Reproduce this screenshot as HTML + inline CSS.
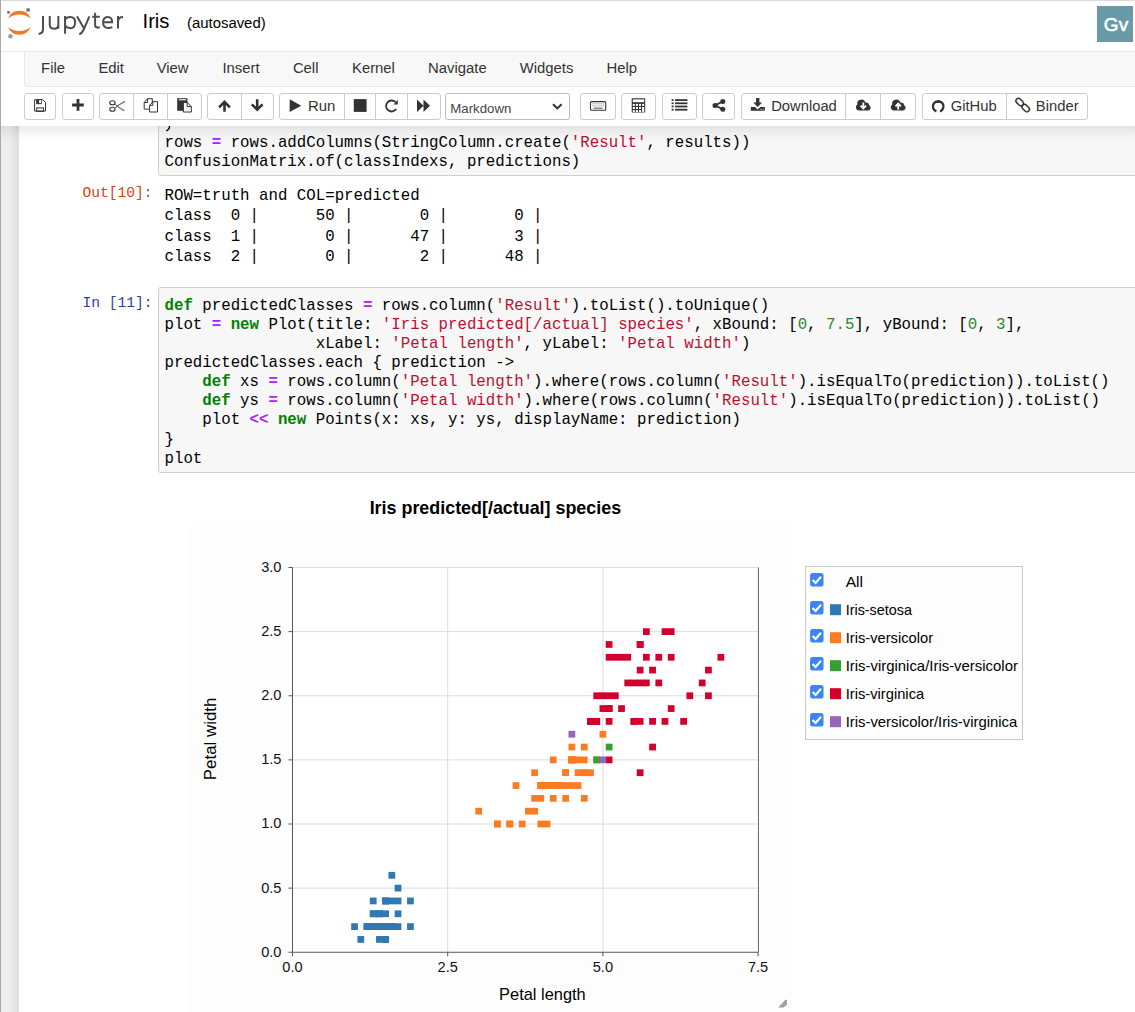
<!DOCTYPE html><html><head><meta charset="utf-8"><style>
html,body{margin:0;padding:0;background:#fff;width:1135px;height:1012px;overflow:hidden}
svg{display:block}
text{white-space:pre}
</style></head><body>
<svg width="1135" height="1012" viewBox="0 0 1135 1012">
<defs>
<linearGradient id="shTop" x1="0" y1="0" x2="0" y2="1">
<stop offset="0" stop-color="#000" stop-opacity="0.08"/>
<stop offset="0.15" stop-color="#000" stop-opacity="0.065"/>
<stop offset="0.4" stop-color="#000" stop-opacity="0.035"/>
<stop offset="0.7" stop-color="#000" stop-opacity="0.012"/>
<stop offset="1" stop-color="#000" stop-opacity="0"/>
</linearGradient>
<linearGradient id="shLeft" x1="1" y1="0" x2="0" y2="0">
<stop offset="0" stop-color="#000" stop-opacity="0.07"/>
<stop offset="1" stop-color="#000" stop-opacity="0"/>
</linearGradient>
</defs>

<rect x="0" y="0" width="1135" height="1012" fill="#fff"/>
<rect x="1" y="126" width="18" height="886" fill="#eeeeee"/>
<rect x="9" y="126" width="10" height="886" fill="url(#shLeft)"/>
<rect x="158.5" y="100.5" width="990" height="75" rx="2" fill="#f7f7f7" stroke="#cfcfcf" stroke-width="1"/>
<path d="M169.6,125.5 Q169.6,129.6 166.2,130.9" fill="none" stroke="#000" stroke-width="1.4"/>
<text x="164.50" y="147.1" font-family='"Liberation Mono", monospace' font-size="15.75" fill="#000" font-weight="normal" xml:space="preserve">rows</text><text x="211.75" y="147.1" font-family='"Liberation Mono", monospace' font-size="15.75" fill="#aa22ff" font-weight="bold" xml:space="preserve">=</text><text x="230.65" y="147.1" font-family='"Liberation Mono", monospace' font-size="15.75" fill="#000" font-weight="normal" xml:space="preserve">rows</text><text x="268.45" y="147.1" font-family='"Liberation Mono", monospace' font-size="15.75" fill="#000" font-weight="normal" xml:space="preserve">.</text><text x="277.90" y="147.1" font-family='"Liberation Mono", monospace' font-size="15.75" fill="#000" font-weight="normal" xml:space="preserve">addColumns</text><text x="372.40" y="147.1" font-family='"Liberation Mono", monospace' font-size="15.75" fill="#000" font-weight="normal" xml:space="preserve">(</text><text x="381.85" y="147.1" font-family='"Liberation Mono", monospace' font-size="15.75" fill="#000" font-weight="normal" xml:space="preserve">StringColumn</text><text x="495.25" y="147.1" font-family='"Liberation Mono", monospace' font-size="15.75" fill="#000" font-weight="normal" xml:space="preserve">.</text><text x="504.70" y="147.1" font-family='"Liberation Mono", monospace' font-size="15.75" fill="#000" font-weight="normal" xml:space="preserve">create</text><text x="561.40" y="147.1" font-family='"Liberation Mono", monospace' font-size="15.75" fill="#000" font-weight="normal" xml:space="preserve">(</text><text x="570.85" y="147.1" font-family='"Liberation Mono", monospace' font-size="15.75" fill="#bb1030" font-weight="normal" xml:space="preserve">&#x27;Result&#x27;</text><text x="646.45" y="147.1" font-family='"Liberation Mono", monospace' font-size="15.75" fill="#000" font-weight="normal" xml:space="preserve">,</text><text x="665.35" y="147.1" font-family='"Liberation Mono", monospace' font-size="15.75" fill="#000" font-weight="normal" xml:space="preserve">results</text><text x="731.50" y="147.1" font-family='"Liberation Mono", monospace' font-size="15.75" fill="#000" font-weight="normal" xml:space="preserve">)</text><text x="740.95" y="147.1" font-family='"Liberation Mono", monospace' font-size="15.75" fill="#000" font-weight="normal" xml:space="preserve">)</text>
<text x="164.50" y="166.1" font-family='"Liberation Mono", monospace' font-size="15.75" fill="#000" font-weight="normal" xml:space="preserve">ConfusionMatrix</text><text x="306.25" y="166.1" font-family='"Liberation Mono", monospace' font-size="15.75" fill="#000" font-weight="normal" xml:space="preserve">.</text><text x="315.70" y="166.1" font-family='"Liberation Mono", monospace' font-size="15.75" fill="#000" font-weight="normal" xml:space="preserve">of</text><text x="334.60" y="166.1" font-family='"Liberation Mono", monospace' font-size="15.75" fill="#000" font-weight="normal" xml:space="preserve">(</text><text x="344.05" y="166.1" font-family='"Liberation Mono", monospace' font-size="15.75" fill="#000" font-weight="normal" xml:space="preserve">classIndexs</text><text x="448.00" y="166.1" font-family='"Liberation Mono", monospace' font-size="15.75" fill="#000" font-weight="normal" xml:space="preserve">,</text><text x="466.90" y="166.1" font-family='"Liberation Mono", monospace' font-size="15.75" fill="#000" font-weight="normal" xml:space="preserve">predictions</text><text x="570.85" y="166.1" font-family='"Liberation Mono", monospace' font-size="15.75" fill="#000" font-weight="normal" xml:space="preserve">)</text>
<text x="152.6" y="196.9" font-family='"Liberation Mono", monospace' font-size="14.625" fill="#d84315" font-weight="normal" text-anchor="end" >Out[10]:</text>
<text x="164.5" y="199.7" font-family='"Liberation Mono", monospace' font-size="15.75" fill="#000" xml:space="preserve">ROW=truth and COL=predicted</text>
<text x="164.5" y="219.9" font-family='"Liberation Mono", monospace' font-size="15.75" fill="#000" xml:space="preserve">class  0 |      50 |       0 |       0 |</text>
<text x="164.5" y="240.7" font-family='"Liberation Mono", monospace' font-size="15.75" fill="#000" xml:space="preserve">class  1 |       0 |      47 |       3 |</text>
<text x="164.5" y="260.7" font-family='"Liberation Mono", monospace' font-size="15.75" fill="#000" xml:space="preserve">class  2 |       0 |       2 |      48 |</text>
<text x="152.6" y="307" font-family='"Liberation Mono", monospace' font-size="14.625" fill="#303f9f" font-weight="normal" text-anchor="end" >In [11]:</text>
<rect x="158.5" y="287.5" width="990" height="185" rx="2" fill="#f7f7f7" stroke="#cfcfcf" stroke-width="1"/>
<text x="164.50" y="309.9" font-family='"Liberation Mono", monospace' font-size="15.75" fill="#008000" font-weight="bold" xml:space="preserve">def</text><text x="202.30" y="309.9" font-family='"Liberation Mono", monospace' font-size="15.75" fill="#000" font-weight="normal" xml:space="preserve">predictedClasses</text><text x="362.95" y="309.9" font-family='"Liberation Mono", monospace' font-size="15.75" fill="#aa22ff" font-weight="bold" xml:space="preserve">=</text><text x="381.85" y="309.9" font-family='"Liberation Mono", monospace' font-size="15.75" fill="#000" font-weight="normal" xml:space="preserve">rows</text><text x="419.65" y="309.9" font-family='"Liberation Mono", monospace' font-size="15.75" fill="#000" font-weight="normal" xml:space="preserve">.</text><text x="429.10" y="309.9" font-family='"Liberation Mono", monospace' font-size="15.75" fill="#000" font-weight="normal" xml:space="preserve">column</text><text x="485.80" y="309.9" font-family='"Liberation Mono", monospace' font-size="15.75" fill="#000" font-weight="normal" xml:space="preserve">(</text><text x="495.25" y="309.9" font-family='"Liberation Mono", monospace' font-size="15.75" fill="#bb1030" font-weight="normal" xml:space="preserve">&#x27;Result&#x27;</text><text x="570.85" y="309.9" font-family='"Liberation Mono", monospace' font-size="15.75" fill="#000" font-weight="normal" xml:space="preserve">)</text><text x="580.30" y="309.9" font-family='"Liberation Mono", monospace' font-size="15.75" fill="#000" font-weight="normal" xml:space="preserve">.</text><text x="589.75" y="309.9" font-family='"Liberation Mono", monospace' font-size="15.75" fill="#000" font-weight="normal" xml:space="preserve">toList</text><text x="646.45" y="309.9" font-family='"Liberation Mono", monospace' font-size="15.75" fill="#000" font-weight="normal" xml:space="preserve">(</text><text x="655.90" y="309.9" font-family='"Liberation Mono", monospace' font-size="15.75" fill="#000" font-weight="normal" xml:space="preserve">)</text><text x="665.35" y="309.9" font-family='"Liberation Mono", monospace' font-size="15.75" fill="#000" font-weight="normal" xml:space="preserve">.</text><text x="674.80" y="309.9" font-family='"Liberation Mono", monospace' font-size="15.75" fill="#000" font-weight="normal" xml:space="preserve">toUnique</text><text x="750.40" y="309.9" font-family='"Liberation Mono", monospace' font-size="15.75" fill="#000" font-weight="normal" xml:space="preserve">(</text><text x="759.85" y="309.9" font-family='"Liberation Mono", monospace' font-size="15.75" fill="#000" font-weight="normal" xml:space="preserve">)</text>
<text x="164.50" y="328.99" font-family='"Liberation Mono", monospace' font-size="15.75" fill="#000" font-weight="normal" xml:space="preserve">plot</text><text x="211.75" y="328.99" font-family='"Liberation Mono", monospace' font-size="15.75" fill="#aa22ff" font-weight="bold" xml:space="preserve">=</text><text x="230.65" y="328.99" font-family='"Liberation Mono", monospace' font-size="15.75" fill="#008000" font-weight="bold" xml:space="preserve">new</text><text x="268.45" y="328.99" font-family='"Liberation Mono", monospace' font-size="15.75" fill="#000" font-weight="normal" xml:space="preserve">Plot</text><text x="306.25" y="328.99" font-family='"Liberation Mono", monospace' font-size="15.75" fill="#000" font-weight="normal" xml:space="preserve">(</text><text x="315.70" y="328.99" font-family='"Liberation Mono", monospace' font-size="15.75" fill="#000" font-weight="normal" xml:space="preserve">title</text><text x="362.95" y="328.99" font-family='"Liberation Mono", monospace' font-size="15.75" fill="#000" font-weight="normal" xml:space="preserve">:</text><text x="381.85" y="328.99" font-family='"Liberation Mono", monospace' font-size="15.75" fill="#bb1030" font-weight="normal" xml:space="preserve">&#x27;Iris predicted[/actual] species&#x27;</text><text x="693.70" y="328.99" font-family='"Liberation Mono", monospace' font-size="15.75" fill="#000" font-weight="normal" xml:space="preserve">,</text><text x="712.60" y="328.99" font-family='"Liberation Mono", monospace' font-size="15.75" fill="#000" font-weight="normal" xml:space="preserve">xBound</text><text x="769.30" y="328.99" font-family='"Liberation Mono", monospace' font-size="15.75" fill="#000" font-weight="normal" xml:space="preserve">:</text><text x="788.20" y="328.99" font-family='"Liberation Mono", monospace' font-size="15.75" fill="#000" font-weight="normal" xml:space="preserve">[</text><text x="797.65" y="328.99" font-family='"Liberation Mono", monospace' font-size="15.75" fill="#2a8a2a" font-weight="normal" xml:space="preserve">0</text><text x="807.10" y="328.99" font-family='"Liberation Mono", monospace' font-size="15.75" fill="#000" font-weight="normal" xml:space="preserve">,</text><text x="826.00" y="328.99" font-family='"Liberation Mono", monospace' font-size="15.75" fill="#2a8a2a" font-weight="normal" xml:space="preserve">7.5</text><text x="854.35" y="328.99" font-family='"Liberation Mono", monospace' font-size="15.75" fill="#000" font-weight="normal" xml:space="preserve">]</text><text x="863.80" y="328.99" font-family='"Liberation Mono", monospace' font-size="15.75" fill="#000" font-weight="normal" xml:space="preserve">,</text><text x="882.70" y="328.99" font-family='"Liberation Mono", monospace' font-size="15.75" fill="#000" font-weight="normal" xml:space="preserve">yBound</text><text x="939.40" y="328.99" font-family='"Liberation Mono", monospace' font-size="15.75" fill="#000" font-weight="normal" xml:space="preserve">:</text><text x="958.30" y="328.99" font-family='"Liberation Mono", monospace' font-size="15.75" fill="#000" font-weight="normal" xml:space="preserve">[</text><text x="967.75" y="328.99" font-family='"Liberation Mono", monospace' font-size="15.75" fill="#2a8a2a" font-weight="normal" xml:space="preserve">0</text><text x="977.20" y="328.99" font-family='"Liberation Mono", monospace' font-size="15.75" fill="#000" font-weight="normal" xml:space="preserve">,</text><text x="996.10" y="328.99" font-family='"Liberation Mono", monospace' font-size="15.75" fill="#2a8a2a" font-weight="normal" xml:space="preserve">3</text><text x="1005.55" y="328.99" font-family='"Liberation Mono", monospace' font-size="15.75" fill="#000" font-weight="normal" xml:space="preserve">]</text><text x="1015.00" y="328.99" font-family='"Liberation Mono", monospace' font-size="15.75" fill="#000" font-weight="normal" xml:space="preserve">,</text>
<text x="315.70" y="348.08" font-family='"Liberation Mono", monospace' font-size="15.75" fill="#000" font-weight="normal" xml:space="preserve">xLabel</text><text x="372.40" y="348.08" font-family='"Liberation Mono", monospace' font-size="15.75" fill="#000" font-weight="normal" xml:space="preserve">:</text><text x="391.30" y="348.08" font-family='"Liberation Mono", monospace' font-size="15.75" fill="#bb1030" font-weight="normal" xml:space="preserve">&#x27;Petal length&#x27;</text><text x="523.60" y="348.08" font-family='"Liberation Mono", monospace' font-size="15.75" fill="#000" font-weight="normal" xml:space="preserve">,</text><text x="542.50" y="348.08" font-family='"Liberation Mono", monospace' font-size="15.75" fill="#000" font-weight="normal" xml:space="preserve">yLabel</text><text x="599.20" y="348.08" font-family='"Liberation Mono", monospace' font-size="15.75" fill="#000" font-weight="normal" xml:space="preserve">:</text><text x="618.10" y="348.08" font-family='"Liberation Mono", monospace' font-size="15.75" fill="#bb1030" font-weight="normal" xml:space="preserve">&#x27;Petal width&#x27;</text><text x="740.95" y="348.08" font-family='"Liberation Mono", monospace' font-size="15.75" fill="#000" font-weight="normal" xml:space="preserve">)</text>
<text x="164.50" y="367.17" font-family='"Liberation Mono", monospace' font-size="15.75" fill="#000" font-weight="normal" xml:space="preserve">predictedClasses</text><text x="315.70" y="367.17" font-family='"Liberation Mono", monospace' font-size="15.75" fill="#000" font-weight="normal" xml:space="preserve">.</text><text x="325.15" y="367.17" font-family='"Liberation Mono", monospace' font-size="15.75" fill="#000" font-weight="normal" xml:space="preserve">each</text><text x="372.40" y="367.17" font-family='"Liberation Mono", monospace' font-size="15.75" fill="#000" font-weight="normal" xml:space="preserve">{</text><text x="391.30" y="367.17" font-family='"Liberation Mono", monospace' font-size="15.75" fill="#000" font-weight="normal" xml:space="preserve">prediction</text><text x="495.25" y="367.17" font-family='"Liberation Mono", monospace' font-size="15.75" fill="#000" font-weight="normal" xml:space="preserve">-&gt;</text>
<text x="202.30" y="386.26" font-family='"Liberation Mono", monospace' font-size="15.75" fill="#008000" font-weight="bold" xml:space="preserve">def</text><text x="240.10" y="386.26" font-family='"Liberation Mono", monospace' font-size="15.75" fill="#000" font-weight="normal" xml:space="preserve">xs</text><text x="268.45" y="386.26" font-family='"Liberation Mono", monospace' font-size="15.75" fill="#aa22ff" font-weight="bold" xml:space="preserve">=</text><text x="287.35" y="386.26" font-family='"Liberation Mono", monospace' font-size="15.75" fill="#000" font-weight="normal" xml:space="preserve">rows</text><text x="325.15" y="386.26" font-family='"Liberation Mono", monospace' font-size="15.75" fill="#000" font-weight="normal" xml:space="preserve">.</text><text x="334.60" y="386.26" font-family='"Liberation Mono", monospace' font-size="15.75" fill="#000" font-weight="normal" xml:space="preserve">column</text><text x="391.30" y="386.26" font-family='"Liberation Mono", monospace' font-size="15.75" fill="#000" font-weight="normal" xml:space="preserve">(</text><text x="400.75" y="386.26" font-family='"Liberation Mono", monospace' font-size="15.75" fill="#bb1030" font-weight="normal" xml:space="preserve">&#x27;Petal length&#x27;</text><text x="533.05" y="386.26" font-family='"Liberation Mono", monospace' font-size="15.75" fill="#000" font-weight="normal" xml:space="preserve">)</text><text x="542.50" y="386.26" font-family='"Liberation Mono", monospace' font-size="15.75" fill="#000" font-weight="normal" xml:space="preserve">.</text><text x="551.95" y="386.26" font-family='"Liberation Mono", monospace' font-size="15.75" fill="#000" font-weight="normal" xml:space="preserve">where</text><text x="599.20" y="386.26" font-family='"Liberation Mono", monospace' font-size="15.75" fill="#000" font-weight="normal" xml:space="preserve">(</text><text x="608.65" y="386.26" font-family='"Liberation Mono", monospace' font-size="15.75" fill="#000" font-weight="normal" xml:space="preserve">rows</text><text x="646.45" y="386.26" font-family='"Liberation Mono", monospace' font-size="15.75" fill="#000" font-weight="normal" xml:space="preserve">.</text><text x="655.90" y="386.26" font-family='"Liberation Mono", monospace' font-size="15.75" fill="#000" font-weight="normal" xml:space="preserve">column</text><text x="712.60" y="386.26" font-family='"Liberation Mono", monospace' font-size="15.75" fill="#000" font-weight="normal" xml:space="preserve">(</text><text x="722.05" y="386.26" font-family='"Liberation Mono", monospace' font-size="15.75" fill="#bb1030" font-weight="normal" xml:space="preserve">&#x27;Result&#x27;</text><text x="797.65" y="386.26" font-family='"Liberation Mono", monospace' font-size="15.75" fill="#000" font-weight="normal" xml:space="preserve">)</text><text x="807.10" y="386.26" font-family='"Liberation Mono", monospace' font-size="15.75" fill="#000" font-weight="normal" xml:space="preserve">.</text><text x="816.55" y="386.26" font-family='"Liberation Mono", monospace' font-size="15.75" fill="#000" font-weight="normal" xml:space="preserve">isEqualTo</text><text x="901.60" y="386.26" font-family='"Liberation Mono", monospace' font-size="15.75" fill="#000" font-weight="normal" xml:space="preserve">(</text><text x="911.05" y="386.26" font-family='"Liberation Mono", monospace' font-size="15.75" fill="#000" font-weight="normal" xml:space="preserve">prediction</text><text x="1005.55" y="386.26" font-family='"Liberation Mono", monospace' font-size="15.75" fill="#000" font-weight="normal" xml:space="preserve">)</text><text x="1015.00" y="386.26" font-family='"Liberation Mono", monospace' font-size="15.75" fill="#000" font-weight="normal" xml:space="preserve">)</text><text x="1024.45" y="386.26" font-family='"Liberation Mono", monospace' font-size="15.75" fill="#000" font-weight="normal" xml:space="preserve">.</text><text x="1033.90" y="386.26" font-family='"Liberation Mono", monospace' font-size="15.75" fill="#000" font-weight="normal" xml:space="preserve">toList</text><text x="1090.60" y="386.26" font-family='"Liberation Mono", monospace' font-size="15.75" fill="#000" font-weight="normal" xml:space="preserve">(</text><text x="1100.05" y="386.26" font-family='"Liberation Mono", monospace' font-size="15.75" fill="#000" font-weight="normal" xml:space="preserve">)</text>
<text x="202.30" y="405.35" font-family='"Liberation Mono", monospace' font-size="15.75" fill="#008000" font-weight="bold" xml:space="preserve">def</text><text x="240.10" y="405.35" font-family='"Liberation Mono", monospace' font-size="15.75" fill="#000" font-weight="normal" xml:space="preserve">ys</text><text x="268.45" y="405.35" font-family='"Liberation Mono", monospace' font-size="15.75" fill="#aa22ff" font-weight="bold" xml:space="preserve">=</text><text x="287.35" y="405.35" font-family='"Liberation Mono", monospace' font-size="15.75" fill="#000" font-weight="normal" xml:space="preserve">rows</text><text x="325.15" y="405.35" font-family='"Liberation Mono", monospace' font-size="15.75" fill="#000" font-weight="normal" xml:space="preserve">.</text><text x="334.60" y="405.35" font-family='"Liberation Mono", monospace' font-size="15.75" fill="#000" font-weight="normal" xml:space="preserve">column</text><text x="391.30" y="405.35" font-family='"Liberation Mono", monospace' font-size="15.75" fill="#000" font-weight="normal" xml:space="preserve">(</text><text x="400.75" y="405.35" font-family='"Liberation Mono", monospace' font-size="15.75" fill="#bb1030" font-weight="normal" xml:space="preserve">&#x27;Petal width&#x27;</text><text x="523.60" y="405.35" font-family='"Liberation Mono", monospace' font-size="15.75" fill="#000" font-weight="normal" xml:space="preserve">)</text><text x="533.05" y="405.35" font-family='"Liberation Mono", monospace' font-size="15.75" fill="#000" font-weight="normal" xml:space="preserve">.</text><text x="542.50" y="405.35" font-family='"Liberation Mono", monospace' font-size="15.75" fill="#000" font-weight="normal" xml:space="preserve">where</text><text x="589.75" y="405.35" font-family='"Liberation Mono", monospace' font-size="15.75" fill="#000" font-weight="normal" xml:space="preserve">(</text><text x="599.20" y="405.35" font-family='"Liberation Mono", monospace' font-size="15.75" fill="#000" font-weight="normal" xml:space="preserve">rows</text><text x="637.00" y="405.35" font-family='"Liberation Mono", monospace' font-size="15.75" fill="#000" font-weight="normal" xml:space="preserve">.</text><text x="646.45" y="405.35" font-family='"Liberation Mono", monospace' font-size="15.75" fill="#000" font-weight="normal" xml:space="preserve">column</text><text x="703.15" y="405.35" font-family='"Liberation Mono", monospace' font-size="15.75" fill="#000" font-weight="normal" xml:space="preserve">(</text><text x="712.60" y="405.35" font-family='"Liberation Mono", monospace' font-size="15.75" fill="#bb1030" font-weight="normal" xml:space="preserve">&#x27;Result&#x27;</text><text x="788.20" y="405.35" font-family='"Liberation Mono", monospace' font-size="15.75" fill="#000" font-weight="normal" xml:space="preserve">)</text><text x="797.65" y="405.35" font-family='"Liberation Mono", monospace' font-size="15.75" fill="#000" font-weight="normal" xml:space="preserve">.</text><text x="807.10" y="405.35" font-family='"Liberation Mono", monospace' font-size="15.75" fill="#000" font-weight="normal" xml:space="preserve">isEqualTo</text><text x="892.15" y="405.35" font-family='"Liberation Mono", monospace' font-size="15.75" fill="#000" font-weight="normal" xml:space="preserve">(</text><text x="901.60" y="405.35" font-family='"Liberation Mono", monospace' font-size="15.75" fill="#000" font-weight="normal" xml:space="preserve">prediction</text><text x="996.10" y="405.35" font-family='"Liberation Mono", monospace' font-size="15.75" fill="#000" font-weight="normal" xml:space="preserve">)</text><text x="1005.55" y="405.35" font-family='"Liberation Mono", monospace' font-size="15.75" fill="#000" font-weight="normal" xml:space="preserve">)</text><text x="1015.00" y="405.35" font-family='"Liberation Mono", monospace' font-size="15.75" fill="#000" font-weight="normal" xml:space="preserve">.</text><text x="1024.45" y="405.35" font-family='"Liberation Mono", monospace' font-size="15.75" fill="#000" font-weight="normal" xml:space="preserve">toList</text><text x="1081.15" y="405.35" font-family='"Liberation Mono", monospace' font-size="15.75" fill="#000" font-weight="normal" xml:space="preserve">(</text><text x="1090.60" y="405.35" font-family='"Liberation Mono", monospace' font-size="15.75" fill="#000" font-weight="normal" xml:space="preserve">)</text>
<text x="202.30" y="424.44" font-family='"Liberation Mono", monospace' font-size="15.75" fill="#000" font-weight="normal" xml:space="preserve">plot</text><text x="249.55" y="424.44" font-family='"Liberation Mono", monospace' font-size="15.75" fill="#aa22ff" font-weight="bold" xml:space="preserve">&lt;&lt;</text><text x="277.90" y="424.44" font-family='"Liberation Mono", monospace' font-size="15.75" fill="#008000" font-weight="bold" xml:space="preserve">new</text><text x="315.70" y="424.44" font-family='"Liberation Mono", monospace' font-size="15.75" fill="#000" font-weight="normal" xml:space="preserve">Points</text><text x="372.40" y="424.44" font-family='"Liberation Mono", monospace' font-size="15.75" fill="#000" font-weight="normal" xml:space="preserve">(</text><text x="381.85" y="424.44" font-family='"Liberation Mono", monospace' font-size="15.75" fill="#000" font-weight="normal" xml:space="preserve">x</text><text x="391.30" y="424.44" font-family='"Liberation Mono", monospace' font-size="15.75" fill="#000" font-weight="normal" xml:space="preserve">:</text><text x="410.20" y="424.44" font-family='"Liberation Mono", monospace' font-size="15.75" fill="#000" font-weight="normal" xml:space="preserve">xs</text><text x="429.10" y="424.44" font-family='"Liberation Mono", monospace' font-size="15.75" fill="#000" font-weight="normal" xml:space="preserve">,</text><text x="448.00" y="424.44" font-family='"Liberation Mono", monospace' font-size="15.75" fill="#000" font-weight="normal" xml:space="preserve">y</text><text x="457.45" y="424.44" font-family='"Liberation Mono", monospace' font-size="15.75" fill="#000" font-weight="normal" xml:space="preserve">:</text><text x="476.35" y="424.44" font-family='"Liberation Mono", monospace' font-size="15.75" fill="#000" font-weight="normal" xml:space="preserve">ys</text><text x="495.25" y="424.44" font-family='"Liberation Mono", monospace' font-size="15.75" fill="#000" font-weight="normal" xml:space="preserve">,</text><text x="514.15" y="424.44" font-family='"Liberation Mono", monospace' font-size="15.75" fill="#000" font-weight="normal" xml:space="preserve">displayName</text><text x="618.10" y="424.44" font-family='"Liberation Mono", monospace' font-size="15.75" fill="#000" font-weight="normal" xml:space="preserve">:</text><text x="637.00" y="424.44" font-family='"Liberation Mono", monospace' font-size="15.75" fill="#000" font-weight="normal" xml:space="preserve">prediction</text><text x="731.50" y="424.44" font-family='"Liberation Mono", monospace' font-size="15.75" fill="#000" font-weight="normal" xml:space="preserve">)</text>
<text x="164.50" y="443.53" font-family='"Liberation Mono", monospace' font-size="15.75" fill="#000" font-weight="normal" xml:space="preserve">}</text>
<text x="164.50" y="462.62" font-family='"Liberation Mono", monospace' font-size="15.75" fill="#000" font-weight="normal" xml:space="preserve">plot</text>
<rect x="188" y="526" width="605" height="486" fill="#fdfdfd"/>
<rect x="292.5" y="567.5" width="465.6" height="384.75" fill="#fff"/>
<text x="495.4" y="513.9" font-family='"Liberation Sans", sans-serif' font-size="19" fill="#000" font-weight="bold" text-anchor="middle" textLength="251.5" lengthAdjust="spacingAndGlyphs" >Iris predicted[/actual] species</text>
<line x1="447.70" y1="567.5" x2="447.70" y2="952.25" stroke="#dcdcdc" stroke-width="1"/>
<line x1="602.90" y1="567.5" x2="602.90" y2="952.25" stroke="#dcdcdc" stroke-width="1"/>
<line x1="292.5" y1="888.12" x2="758.1" y2="888.12" stroke="#dcdcdc" stroke-width="1"/>
<line x1="292.5" y1="824.00" x2="758.1" y2="824.00" stroke="#dcdcdc" stroke-width="1"/>
<line x1="292.5" y1="759.88" x2="758.1" y2="759.88" stroke="#dcdcdc" stroke-width="1"/>
<line x1="292.5" y1="695.75" x2="758.1" y2="695.75" stroke="#dcdcdc" stroke-width="1"/>
<line x1="292.5" y1="631.62" x2="758.1" y2="631.62" stroke="#dcdcdc" stroke-width="1"/>
<line x1="292.5" y1="567.50" x2="758.1" y2="567.50" stroke="#dcdcdc" stroke-width="1"/>
<line x1="758.45" y1="567.5" x2="758.45" y2="952.25" stroke="#666" stroke-width="1"/>
<line x1="292.5" y1="567.5" x2="292.5" y2="952.25" stroke="#555" stroke-width="1"/>
<line x1="292.5" y1="952.25" x2="758.1" y2="952.25" stroke="#555" stroke-width="1"/>
<line x1="288.5" y1="952.25" x2="292.5" y2="952.25" stroke="#555" stroke-width="1"/>
<text x="281.5" y="956.65" font-family='"Liberation Sans", sans-serif' font-size="14.6" fill="#111" font-weight="normal" text-anchor="end" >0.0</text>
<line x1="288.5" y1="888.12" x2="292.5" y2="888.12" stroke="#555" stroke-width="1"/>
<text x="281.5" y="892.52" font-family='"Liberation Sans", sans-serif' font-size="14.6" fill="#111" font-weight="normal" text-anchor="end" >0.5</text>
<line x1="288.5" y1="824.00" x2="292.5" y2="824.00" stroke="#555" stroke-width="1"/>
<text x="281.5" y="828.4" font-family='"Liberation Sans", sans-serif' font-size="14.6" fill="#111" font-weight="normal" text-anchor="end" >1.0</text>
<line x1="288.5" y1="759.88" x2="292.5" y2="759.88" stroke="#555" stroke-width="1"/>
<text x="281.5" y="764.27" font-family='"Liberation Sans", sans-serif' font-size="14.6" fill="#111" font-weight="normal" text-anchor="end" >1.5</text>
<line x1="288.5" y1="695.75" x2="292.5" y2="695.75" stroke="#555" stroke-width="1"/>
<text x="281.5" y="700.15" font-family='"Liberation Sans", sans-serif' font-size="14.6" fill="#111" font-weight="normal" text-anchor="end" >2.0</text>
<line x1="288.5" y1="631.62" x2="292.5" y2="631.62" stroke="#555" stroke-width="1"/>
<text x="281.5" y="636.02" font-family='"Liberation Sans", sans-serif' font-size="14.6" fill="#111" font-weight="normal" text-anchor="end" >2.5</text>
<line x1="288.5" y1="567.50" x2="292.5" y2="567.50" stroke="#555" stroke-width="1"/>
<text x="281.5" y="571.9" font-family='"Liberation Sans", sans-serif' font-size="14.6" fill="#111" font-weight="normal" text-anchor="end" >3.0</text>
<line x1="292.50" y1="952.25" x2="292.50" y2="956.25" stroke="#555" stroke-width="1"/>
<text x="292.5" y="972.4" font-family='"Liberation Sans", sans-serif' font-size="14.6" fill="#111" font-weight="normal" text-anchor="middle" >0.0</text>
<line x1="447.70" y1="952.25" x2="447.70" y2="956.25" stroke="#555" stroke-width="1"/>
<text x="447.7" y="972.4" font-family='"Liberation Sans", sans-serif' font-size="14.6" fill="#111" font-weight="normal" text-anchor="middle" >2.5</text>
<line x1="602.90" y1="952.25" x2="602.90" y2="956.25" stroke="#555" stroke-width="1"/>
<text x="602.9" y="972.4" font-family='"Liberation Sans", sans-serif' font-size="14.6" fill="#111" font-weight="normal" text-anchor="middle" >5.0</text>
<line x1="758.10" y1="952.25" x2="758.10" y2="956.25" stroke="#555" stroke-width="1"/>
<text x="758.1" y="972.4" font-family='"Liberation Sans", sans-serif' font-size="14.6" fill="#111" font-weight="normal" text-anchor="middle" >7.5</text>
<text x="542.4" y="1000" font-family='"Liberation Sans", sans-serif' font-size="16.4" fill="#000" font-weight="normal" text-anchor="middle" textLength="86.6" lengthAdjust="spacingAndGlyphs" >Petal length</text>
<text x="0" y="0" transform="translate(216,738.9) rotate(-90)" font-family='"Liberation Sans", sans-serif' font-size="16.4" fill="#000" text-anchor="middle" textLength="82.5" lengthAdjust="spacingAndGlyphs">Petal width</text>
<g fill="#2f78b3"><rect x="376.04" y="923.23" width="6.75" height="6.75"/><rect x="376.04" y="923.23" width="6.75" height="6.75"/><rect x="369.83" y="923.23" width="6.75" height="6.75"/><rect x="382.25" y="923.23" width="6.75" height="6.75"/><rect x="376.04" y="923.23" width="6.75" height="6.75"/><rect x="394.66" y="897.58" width="6.75" height="6.75"/><rect x="376.04" y="910.40" width="6.75" height="6.75"/><rect x="382.25" y="923.23" width="6.75" height="6.75"/><rect x="376.04" y="923.23" width="6.75" height="6.75"/><rect x="382.25" y="936.05" width="6.75" height="6.75"/><rect x="382.25" y="923.23" width="6.75" height="6.75"/><rect x="388.45" y="923.23" width="6.75" height="6.75"/><rect x="376.04" y="936.05" width="6.75" height="6.75"/><rect x="357.41" y="936.05" width="6.75" height="6.75"/><rect x="363.62" y="923.23" width="6.75" height="6.75"/><rect x="382.25" y="897.58" width="6.75" height="6.75"/><rect x="369.83" y="897.58" width="6.75" height="6.75"/><rect x="376.04" y="910.40" width="6.75" height="6.75"/><rect x="394.66" y="910.40" width="6.75" height="6.75"/><rect x="382.25" y="910.40" width="6.75" height="6.75"/><rect x="394.66" y="923.23" width="6.75" height="6.75"/><rect x="382.25" y="897.58" width="6.75" height="6.75"/><rect x="351.20" y="923.23" width="6.75" height="6.75"/><rect x="394.66" y="884.75" width="6.75" height="6.75"/><rect x="407.08" y="923.23" width="6.75" height="6.75"/><rect x="388.45" y="923.23" width="6.75" height="6.75"/><rect x="388.45" y="897.58" width="6.75" height="6.75"/><rect x="382.25" y="923.23" width="6.75" height="6.75"/><rect x="376.04" y="923.23" width="6.75" height="6.75"/><rect x="388.45" y="923.23" width="6.75" height="6.75"/><rect x="388.45" y="923.23" width="6.75" height="6.75"/><rect x="382.25" y="897.58" width="6.75" height="6.75"/><rect x="382.25" y="936.05" width="6.75" height="6.75"/><rect x="376.04" y="923.23" width="6.75" height="6.75"/><rect x="382.25" y="936.05" width="6.75" height="6.75"/><rect x="363.62" y="923.23" width="6.75" height="6.75"/><rect x="369.83" y="923.23" width="6.75" height="6.75"/><rect x="382.25" y="936.05" width="6.75" height="6.75"/><rect x="369.83" y="923.23" width="6.75" height="6.75"/><rect x="382.25" y="923.23" width="6.75" height="6.75"/><rect x="369.83" y="910.40" width="6.75" height="6.75"/><rect x="369.83" y="910.40" width="6.75" height="6.75"/><rect x="369.83" y="923.23" width="6.75" height="6.75"/><rect x="388.45" y="871.92" width="6.75" height="6.75"/><rect x="407.08" y="897.58" width="6.75" height="6.75"/><rect x="376.04" y="910.40" width="6.75" height="6.75"/><rect x="388.45" y="923.23" width="6.75" height="6.75"/><rect x="376.04" y="923.23" width="6.75" height="6.75"/><rect x="382.25" y="923.23" width="6.75" height="6.75"/><rect x="376.04" y="923.23" width="6.75" height="6.75"/></g>
<g fill="#fb7b24"><rect x="580.90" y="769.33" width="6.75" height="6.75"/><rect x="568.49" y="756.50" width="6.75" height="6.75"/><rect x="593.32" y="756.50" width="6.75" height="6.75"/><rect x="537.45" y="782.15" width="6.75" height="6.75"/><rect x="574.69" y="756.50" width="6.75" height="6.75"/><rect x="568.49" y="782.15" width="6.75" height="6.75"/><rect x="580.90" y="743.67" width="6.75" height="6.75"/><rect x="493.99" y="820.62" width="6.75" height="6.75"/><rect x="574.69" y="782.15" width="6.75" height="6.75"/><rect x="531.24" y="769.33" width="6.75" height="6.75"/><rect x="506.41" y="820.62" width="6.75" height="6.75"/><rect x="549.86" y="756.50" width="6.75" height="6.75"/><rect x="537.45" y="820.62" width="6.75" height="6.75"/><rect x="580.90" y="769.33" width="6.75" height="6.75"/><rect x="512.61" y="782.15" width="6.75" height="6.75"/><rect x="562.28" y="769.33" width="6.75" height="6.75"/><rect x="568.49" y="756.50" width="6.75" height="6.75"/><rect x="543.65" y="820.62" width="6.75" height="6.75"/><rect x="568.49" y="756.50" width="6.75" height="6.75"/><rect x="531.24" y="807.80" width="6.75" height="6.75"/><rect x="537.45" y="782.15" width="6.75" height="6.75"/><rect x="580.90" y="794.98" width="6.75" height="6.75"/><rect x="556.07" y="782.15" width="6.75" height="6.75"/><rect x="562.28" y="769.33" width="6.75" height="6.75"/><rect x="587.11" y="769.33" width="6.75" height="6.75"/><rect x="599.52" y="730.85" width="6.75" height="6.75"/><rect x="568.49" y="756.50" width="6.75" height="6.75"/><rect x="506.41" y="820.62" width="6.75" height="6.75"/><rect x="525.03" y="807.80" width="6.75" height="6.75"/><rect x="518.82" y="820.62" width="6.75" height="6.75"/><rect x="531.24" y="794.98" width="6.75" height="6.75"/><rect x="568.49" y="756.50" width="6.75" height="6.75"/><rect x="568.49" y="743.67" width="6.75" height="6.75"/><rect x="580.90" y="756.50" width="6.75" height="6.75"/><rect x="562.28" y="782.15" width="6.75" height="6.75"/><rect x="543.65" y="782.15" width="6.75" height="6.75"/><rect x="537.45" y="782.15" width="6.75" height="6.75"/><rect x="562.28" y="794.98" width="6.75" height="6.75"/><rect x="574.69" y="769.33" width="6.75" height="6.75"/><rect x="537.45" y="794.98" width="6.75" height="6.75"/><rect x="493.99" y="820.62" width="6.75" height="6.75"/><rect x="549.86" y="782.15" width="6.75" height="6.75"/><rect x="549.86" y="794.98" width="6.75" height="6.75"/><rect x="549.86" y="782.15" width="6.75" height="6.75"/><rect x="556.07" y="782.15" width="6.75" height="6.75"/><rect x="475.37" y="807.80" width="6.75" height="6.75"/><rect x="543.65" y="782.15" width="6.75" height="6.75"/></g>
<g fill="#35a02f"><rect x="593.32" y="756.50" width="6.75" height="6.75"/><rect x="605.73" y="743.67" width="6.75" height="6.75"/><rect x="587.11" y="718.02" width="6.75" height="6.75"/></g>
<g fill="#d1002c"><rect x="661.61" y="628.25" width="6.75" height="6.75"/><rect x="605.73" y="705.20" width="6.75" height="6.75"/><rect x="655.40" y="679.55" width="6.75" height="6.75"/><rect x="636.77" y="718.02" width="6.75" height="6.75"/><rect x="649.19" y="666.72" width="6.75" height="6.75"/><rect x="698.85" y="679.55" width="6.75" height="6.75"/><rect x="680.23" y="718.02" width="6.75" height="6.75"/><rect x="649.19" y="718.02" width="6.75" height="6.75"/><rect x="667.81" y="628.25" width="6.75" height="6.75"/><rect x="605.73" y="692.38" width="6.75" height="6.75"/><rect x="618.15" y="705.20" width="6.75" height="6.75"/><rect x="630.57" y="679.55" width="6.75" height="6.75"/><rect x="599.52" y="692.38" width="6.75" height="6.75"/><rect x="605.73" y="641.08" width="6.75" height="6.75"/><rect x="618.15" y="653.90" width="6.75" height="6.75"/><rect x="630.57" y="718.02" width="6.75" height="6.75"/><rect x="705.06" y="666.72" width="6.75" height="6.75"/><rect x="717.48" y="653.90" width="6.75" height="6.75"/><rect x="642.98" y="653.90" width="6.75" height="6.75"/><rect x="593.32" y="692.38" width="6.75" height="6.75"/><rect x="705.06" y="692.38" width="6.75" height="6.75"/><rect x="593.32" y="718.02" width="6.75" height="6.75"/><rect x="642.98" y="679.55" width="6.75" height="6.75"/><rect x="661.61" y="718.02" width="6.75" height="6.75"/><rect x="587.11" y="718.02" width="6.75" height="6.75"/><rect x="593.32" y="718.02" width="6.75" height="6.75"/><rect x="636.77" y="679.55" width="6.75" height="6.75"/><rect x="649.19" y="743.67" width="6.75" height="6.75"/><rect x="667.81" y="705.20" width="6.75" height="6.75"/><rect x="686.44" y="692.38" width="6.75" height="6.75"/><rect x="636.77" y="666.72" width="6.75" height="6.75"/><rect x="605.73" y="756.50" width="6.75" height="6.75"/><rect x="636.77" y="769.33" width="6.75" height="6.75"/><rect x="667.81" y="653.90" width="6.75" height="6.75"/><rect x="636.77" y="641.08" width="6.75" height="6.75"/><rect x="630.57" y="718.02" width="6.75" height="6.75"/><rect x="587.11" y="718.02" width="6.75" height="6.75"/><rect x="624.36" y="679.55" width="6.75" height="6.75"/><rect x="636.77" y="641.08" width="6.75" height="6.75"/><rect x="605.73" y="653.90" width="6.75" height="6.75"/><rect x="605.73" y="705.20" width="6.75" height="6.75"/><rect x="655.40" y="653.90" width="6.75" height="6.75"/><rect x="642.98" y="628.25" width="6.75" height="6.75"/><rect x="611.94" y="653.90" width="6.75" height="6.75"/><rect x="599.52" y="705.20" width="6.75" height="6.75"/><rect x="611.94" y="692.38" width="6.75" height="6.75"/><rect x="624.36" y="653.90" width="6.75" height="6.75"/><rect x="605.73" y="718.02" width="6.75" height="6.75"/></g>
<g fill="#9467bd"><rect x="568.49" y="730.85" width="6.75" height="6.75"/><rect x="599.52" y="756.50" width="6.75" height="6.75"/></g>
<path d="M778.2,1007.6 L785.6,999.4 L787,1000.2 L787,1004.4 L783.7,1007.6 Z" fill="#a0a0a0"/>
<rect x="805.5" y="566.5" width="217" height="173" fill="#fdfdfd" stroke="#c8c8c8" stroke-width="1"/>
<rect x="810.1" y="573.1" width="13.4" height="13.4" rx="2.5" fill="#3b84f4"/>
<path d="M812.6,580.0 L815.6,583.0 L821,576.7" fill="none" stroke="#fff" stroke-width="2.2"/>
<text x="845.7" y="587.0" font-family='"Liberation Sans", sans-serif' font-size="14.8" fill="#000" font-weight="normal" textLength="17.4" lengthAdjust="spacingAndGlyphs" >All</text>
<rect x="810.1" y="601.1" width="13.4" height="13.4" rx="2.5" fill="#3b84f4"/>
<path d="M812.6,608.0 L815.6,611.0 L821,604.7" fill="none" stroke="#fff" stroke-width="2.2"/>
<rect x="830" y="604.2" width="11" height="11" fill="#2f78b3"/>
<text x="845.7" y="615.0" font-family='"Liberation Sans", sans-serif' font-size="14.8" fill="#000" font-weight="normal" textLength="66.2" lengthAdjust="spacingAndGlyphs" >Iris-setosa</text>
<rect x="810.1" y="629.1" width="13.4" height="13.4" rx="2.5" fill="#3b84f4"/>
<path d="M812.6,636.0 L815.6,639.0 L821,632.7" fill="none" stroke="#fff" stroke-width="2.2"/>
<rect x="830" y="632.2" width="11" height="11" fill="#fb7b24"/>
<text x="845.7" y="643.0" font-family='"Liberation Sans", sans-serif' font-size="14.8" fill="#000" font-weight="normal" textLength="87.4" lengthAdjust="spacingAndGlyphs" >Iris-versicolor</text>
<rect x="810.1" y="657.1" width="13.4" height="13.4" rx="2.5" fill="#3b84f4"/>
<path d="M812.6,664.0 L815.6,667.0 L821,660.7" fill="none" stroke="#fff" stroke-width="2.2"/>
<rect x="830" y="660.2" width="11" height="11" fill="#35a02f"/>
<text x="845.7" y="671.0" font-family='"Liberation Sans", sans-serif' font-size="14.8" fill="#000" font-weight="normal" textLength="172.2" lengthAdjust="spacingAndGlyphs" >Iris-virginica/Iris-versicolor</text>
<rect x="810.1" y="685.1" width="13.4" height="13.4" rx="2.5" fill="#3b84f4"/>
<path d="M812.6,692.0 L815.6,695.0 L821,688.7" fill="none" stroke="#fff" stroke-width="2.2"/>
<rect x="830" y="688.2" width="11" height="11" fill="#d1002c"/>
<text x="845.7" y="699.0" font-family='"Liberation Sans", sans-serif' font-size="14.8" fill="#000" font-weight="normal" textLength="78.5" lengthAdjust="spacingAndGlyphs" >Iris-virginica</text>
<rect x="810.1" y="713.1" width="13.4" height="13.4" rx="2.5" fill="#3b84f4"/>
<path d="M812.6,720.0 L815.6,723.0 L821,716.7" fill="none" stroke="#fff" stroke-width="2.2"/>
<rect x="830" y="716.2" width="11" height="11" fill="#9467bd"/>
<text x="845.7" y="727.0" font-family='"Liberation Sans", sans-serif' font-size="14.8" fill="#000" font-weight="normal" textLength="171.5" lengthAdjust="spacingAndGlyphs" >Iris-versicolor/Iris-virginica</text>
<rect x="0" y="126" width="1135" height="18" fill="url(#shTop)"/>
<rect x="0" y="0" width="1135" height="126" fill="#fff"/>
<rect x="0" y="0" width="1135" height="1" fill="#d9dadc"/>
<rect x="0" y="51" width="1135" height="1" fill="#e7e7e7"/>
<rect x="0" y="0" width="1" height="1012" fill="#aaaaaa"/>
<path d="M8.1,18.2 A12.19,12.19 0 0 1 30.6,18.2 A18.56,18.56 0 0 0 8.1,18.2 Z" fill="#f37726"/>
<path d="M8.1,27.1 A12.07,12.07 0 0 0 30.6,27.1 A18.18,18.18 0 0 1 8.1,27.1 Z" fill="#f37726"/>
<circle cx="8.5" cy="12.3" r="1.5" fill="#767677"/>
<circle cx="28.1" cy="9.9" r="1.9" fill="#767677"/>
<circle cx="10.4" cy="36.2" r="2.3" fill="#9e9e9e"/>
<path fill="none" stroke="#4d4d4d" stroke-width="2" d="M43,16 V29.5 Q43,33.2 38.6,34.1 M49.75,16 V24.5 Q49.75,28.7 54,28.7 Q58.35,28.7 58.35,24.2 M58.35,16 V28.7 M65.05,16 V33.8 M65.05,19.8 Q66.4,17 70.2,17 Q75.1,17 75.1,22.45 Q75.1,28.2 70.2,28.2 Q66.4,28.2 65.05,25.2 M77,16.3 L84,28.5 M89.4,16.3 L83.5,30 Q82,33.3 79.3,34.3 M95.1,12.7 V25.2 Q95.1,27.6 98.3,27.6 H99.8 M92.2,16.8 H99.8 M103.1,22.3 H112.1 Q112.3,17.1 107.6,17.1 Q103.1,17.1 103.1,22.6 Q103.1,28 108.2,28 Q110.5,28 112.3,27.2 M118,16.1 V28.6 M118,21 Q118.7,16.9 123,16.9"/>
<text x="142.5" y="28" font-family='"Liberation Sans", sans-serif' font-size="20.25" fill="#000" font-weight="normal" >Iris</text>
<text x="187" y="27.8" font-family='"Liberation Sans", sans-serif' font-size="14.9" fill="#000" font-weight="normal" >(autosaved)</text>
<rect x="1097" y="6" width="36" height="36" fill="#6a9aa8"/>
<text x="1116" y="31.1" font-family='"Liberation Sans", sans-serif' font-size="19" fill="#fff" font-weight="normal" text-anchor="middle" stroke="#fff" stroke-width="0.6">Gv</text>
<path d="M24.5,51.5 H1140 V86.5 H26.7 Q24.5,86.5 24.5,84.3 Z" fill="#f8f8f8" stroke="#e7e7e7" stroke-width="1"/>
<text x="41.099999999999994" y="73" font-family='"Liberation Sans", sans-serif' font-size="14.85" fill="#333" font-weight="normal" >File</text>
<text x="98.39999999999999" y="73" font-family='"Liberation Sans", sans-serif' font-size="14.85" fill="#333" font-weight="normal" >Edit</text>
<text x="156.70000000000002" y="73" font-family='"Liberation Sans", sans-serif' font-size="14.85" fill="#333" font-weight="normal" >View</text>
<text x="222.4" y="73" font-family='"Liberation Sans", sans-serif' font-size="14.85" fill="#333" font-weight="normal" >Insert</text>
<text x="292.90000000000003" y="73" font-family='"Liberation Sans", sans-serif' font-size="14.85" fill="#333" font-weight="normal" >Cell</text>
<text x="352.0" y="73" font-family='"Liberation Sans", sans-serif' font-size="14.85" fill="#333" font-weight="normal" >Kernel</text>
<text x="428.1" y="73" font-family='"Liberation Sans", sans-serif' font-size="14.85" fill="#333" font-weight="normal" >Navigate</text>
<text x="519.6999999999999" y="73" font-family='"Liberation Sans", sans-serif' font-size="14.85" fill="#333" font-weight="normal" >Widgets</text>
<text x="606.5999999999999" y="73" font-family='"Liberation Sans", sans-serif' font-size="14.85" fill="#333" font-weight="normal" >Help</text>
<rect x="24.5" y="93.5" width="31" height="26" rx="2.5" fill="#fff" stroke="#cccccc" stroke-width="1"/>
<rect x="62.5" y="93.5" width="31" height="26" rx="2.5" fill="#fff" stroke="#cccccc" stroke-width="1"/>
<rect x="99.5" y="93.5" width="102" height="26" rx="2.5" fill="#fff" stroke="#cccccc" stroke-width="1"/>
<line x1="133.5" y1="94" x2="133.5" y2="119" stroke="#cccccc" stroke-width="1"/>
<line x1="167.5" y1="94" x2="167.5" y2="119" stroke="#cccccc" stroke-width="1"/>
<rect x="207.5" y="93.5" width="66" height="26" rx="2.5" fill="#fff" stroke="#cccccc" stroke-width="1"/>
<line x1="241.5" y1="94" x2="241.5" y2="119" stroke="#cccccc" stroke-width="1"/>
<rect x="279.5" y="93.5" width="161" height="26" rx="2.5" fill="#fff" stroke="#cccccc" stroke-width="1"/>
<line x1="344.5" y1="94" x2="344.5" y2="119" stroke="#cccccc" stroke-width="1"/>
<line x1="375.5" y1="94" x2="375.5" y2="119" stroke="#cccccc" stroke-width="1"/>
<line x1="407.5" y1="94" x2="407.5" y2="119" stroke="#cccccc" stroke-width="1"/>
<rect x="580.5" y="93.5" width="35" height="26" rx="2.5" fill="#fff" stroke="#cccccc" stroke-width="1"/>
<rect x="621.5" y="93.5" width="34" height="26" rx="2.5" fill="#fff" stroke="#cccccc" stroke-width="1"/>
<rect x="662.5" y="93.5" width="34" height="26" rx="2.5" fill="#fff" stroke="#cccccc" stroke-width="1"/>
<rect x="702.5" y="93.5" width="32" height="26" rx="2.5" fill="#fff" stroke="#cccccc" stroke-width="1"/>
<rect x="741.5" y="93.5" width="174" height="26" rx="2.5" fill="#fff" stroke="#cccccc" stroke-width="1"/>
<line x1="845.5" y1="94" x2="845.5" y2="119" stroke="#cccccc" stroke-width="1"/>
<line x1="880.5" y1="94" x2="880.5" y2="119" stroke="#cccccc" stroke-width="1"/>
<rect x="922.5" y="93.5" width="165" height="26" rx="2.5" fill="#fff" stroke="#cccccc" stroke-width="1"/>
<line x1="1006.5" y1="94" x2="1006.5" y2="119" stroke="#cccccc" stroke-width="1"/>
<rect x="445.5" y="93.5" width="124" height="26" rx="2" fill="#fff" stroke="#bbb" stroke-width="1"/>
<text x="450.3" y="112.8" font-family='"Liberation Sans", sans-serif' font-size="13.4" fill="#444" font-weight="normal" textLength="61" lengthAdjust="spacingAndGlyphs" >Markdown</text>
<path d="M553,104.2 L557.3,108.4 L561.6,104.2" fill="none" stroke="#333" stroke-width="2.1"/>
<text x="308" y="110.9" font-family='"Liberation Sans", sans-serif' font-size="14.95" fill="#333" font-weight="normal" >Run</text>
<text x="771.2" y="110.7" font-family='"Liberation Sans", sans-serif' font-size="14.75" fill="#333" font-weight="normal" >Download</text>
<text x="950.7" y="110.9" font-family='"Liberation Sans", sans-serif' font-size="14.8" fill="#333" font-weight="normal" >GitHub</text>
<text x="1035.8" y="110.9" font-family='"Liberation Sans", sans-serif' font-size="14.8" fill="#333" font-weight="normal" >Binder</text>
<path d="M34.6,99.7 H42.7 L45.5,102.5 V111 H34.6 Z" fill="none" stroke="#333" stroke-width="1"/>
<rect x="36.2" y="99.4" width="5.5" height="4.8" fill="#333"/><rect x="39.1" y="100.1" width="1.9" height="3" fill="#fff"/>
<rect x="36.7" y="107.9" width="6.8" height="3.5" fill="none" stroke="#333" stroke-width="1"/>
<path d="M72.1,105 H83.8 M78,99.1 V110.8" stroke="#333" stroke-width="2.8"/>
<g fill="none" stroke="#333" stroke-width="1.1"><ellipse cx="112.4" cy="102.7" rx="2.7" ry="2"/><ellipse cx="112.4" cy="109.3" rx="2.7" ry="2"/></g>
<g fill="none" stroke="#555" stroke-width="0.75"><path d="M114.8,104 L117,105.8 L124.9,101.9 L123.6,101.6 L115.6,107.6"/><path d="M114.8,108.1 L117,106.3 L124.3,110.4 L123,110.6 L115.6,104.6"/></g>
<g fill="#fff" stroke="#333" stroke-width="1"><path d="M147.6,98.7 H152.3 V109.1 H144.2 V102.5 Z"/><path d="M144.2,102.5 H147.6 V98.7" fill="none"/><path d="M152.8,101.7 H157.5 V112 H149.6 V105.4 Z"/><path d="M149.6,105.4 H152.8 V101.7" fill="none"/></g>
<rect x="177.2" y="98.2" width="10.2" height="12.6" fill="#333"/><rect x="179" y="99.2" width="7.1" height="1.1" fill="#fff"/>
<path d="M183.4,102.4 H187.1 L191.3,106.6 V112 H183.4 Z" fill="#fff" stroke="#333" stroke-width="1"/><path d="M187.1,102.4 V106.6 H191.3" fill="none" stroke="#333" stroke-width="1"/>
<path d="M219.1,107.3 L224.5,101.9 L229.9,107.3 M224.5,102.5 V111.7" fill="none" stroke="#333" stroke-width="2.6"/>
<path d="M251.8,104.3 L257.2,109.7 L262.6,104.3 M257.2,109 V99.3" fill="none" stroke="#333" stroke-width="2.6"/>
<path d="M289.7,99.3 L301.2,105.7 L289.7,112.1 Z" fill="#333"/>
<rect x="353.8" y="99.1" width="12.8" height="12.8" fill="#333"/>
<path d="M395.6,102.2 A5.5,5.5 0 1 0 396.2,109.0" fill="none" stroke="#333" stroke-width="1.8"/><path d="M393.6,104.6 L397.8,104.6 L397.8,99.8 Z" fill="#333"/>
<path d="M417,99.5 L423.5,105.75 L417,112 Z M423.5,99.5 L430,105.75 L423.5,112 Z" fill="#333"/>
<rect x="590.5" y="101.6" width="15.2" height="8.6" rx="1" fill="none" stroke="#333" stroke-width="1.1"/>
<rect x="592.2" y="103.2" width="1.2" height="1.1" fill="#999"/>
<rect x="594.3" y="103.2" width="1.2" height="1.1" fill="#999"/>
<rect x="596.4" y="103.2" width="1.2" height="1.1" fill="#999"/>
<rect x="598.5" y="103.2" width="1.2" height="1.1" fill="#999"/>
<rect x="600.6" y="103.2" width="1.2" height="1.1" fill="#999"/>
<rect x="602.7" y="103.2" width="1.2" height="1.1" fill="#999"/>
<rect x="592.2" y="105.2" width="1.2" height="1.1" fill="#999"/>
<rect x="594.3" y="105.2" width="1.2" height="1.1" fill="#999"/>
<rect x="596.4" y="105.2" width="1.2" height="1.1" fill="#999"/>
<rect x="598.5" y="105.2" width="1.2" height="1.1" fill="#999"/>
<rect x="600.6" y="105.2" width="1.2" height="1.1" fill="#999"/>
<rect x="602.7" y="105.2" width="1.2" height="1.1" fill="#999"/>
<rect x="593.5" y="107.6" width="9" height="1.1" fill="#555"/>
<rect x="631.7" y="98.3" width="13.5" height="14.3" rx="1" fill="#333"/><rect x="632.8" y="99.4" width="11.4" height="2.8" fill="#fff"/>
<rect x="632.8" y="103.9" width="2.1" height="2.0" fill="#fff"/>
<rect x="635.9" y="103.9" width="2.1" height="2.0" fill="#fff"/>
<rect x="639.0" y="103.9" width="2.1" height="2.0" fill="#fff"/>
<rect x="642.1" y="103.9" width="2.1" height="2.0" fill="#fff"/>
<rect x="632.8" y="107.0" width="2.1" height="2.0" fill="#fff"/>
<rect x="635.9" y="107.0" width="2.1" height="2.0" fill="#fff"/>
<rect x="639.0" y="107.0" width="2.1" height="2.0" fill="#fff"/>
<rect x="642.1" y="107.0" width="2.1" height="5.1" fill="#fff"/>
<rect x="632.8" y="110.1" width="2.1" height="2.0" fill="#fff"/>
<rect x="635.9" y="110.1" width="2.1" height="2.0" fill="#fff"/>
<rect x="639.0" y="110.1" width="2.1" height="2.0" fill="#fff"/>
<rect x="671.6" y="99.2" width="2" height="1.8" fill="#333"/><rect x="675" y="99.2" width="12.4" height="1.8" fill="#333"/>
<rect x="671.6" y="102.4" width="2" height="1.8" fill="#333"/><rect x="675" y="102.4" width="12.4" height="1.8" fill="#333"/>
<rect x="671.6" y="105.6" width="2" height="1.8" fill="#333"/><rect x="675" y="105.6" width="12.4" height="1.8" fill="#333"/>
<rect x="671.6" y="108.8" width="2" height="1.8" fill="#333"/><rect x="675" y="108.8" width="12.4" height="1.8" fill="#333"/>
<g fill="#333"><circle cx="715" cy="105.4" r="2.5"/><circle cx="722.8" cy="101.5" r="2.5"/><circle cx="722.8" cy="109.3" r="2.5"/></g><path d="M715,105.4 L722.8,101.5 M715,105.4 L722.8,109.3" stroke="#333" stroke-width="1.8"/>
<rect x="756.1" y="98" width="3.3" height="5" fill="#333"/><path d="M753.2,102.5 L762.2,102.5 L757.7,107 Z" fill="#333"/><path d="M750.8,107.1 H754.9 L757.7,109.6 L760.5,107.1 H764.9 V110.8 H750.8 Z" fill="#333"/><rect x="760.6" y="108.8" width="1.1" height="1.1" fill="#ccc"/><rect x="762.6" y="108.8" width="1.1" height="1.1" fill="#ccc"/>
<path d="M858.6,110.5 A3.4,3.4 0 0 1 857.3000000000001,104.4 A4.16,4.16 0 0 1 865.4,102.6 A3.2,3.2 0 0 1 869.3000000000001,105.2 A2.9,2.9 0 0 1 868.3000000000001,110.5 Z" fill="#333"/>
<path d="M863.3,102.6 V108 M860.6,105.6 L863.3,108.4 L866,105.6" fill="none" stroke="#fff" stroke-width="1.8"/>
<path d="M893.5,110.5 A3.4,3.4 0 0 1 892.2,104.4 A4.16,4.16 0 0 1 900.3,102.6 A3.2,3.2 0 0 1 904.2,105.2 A2.9,2.9 0 0 1 903.2,110.5 Z" fill="#333"/>
<path d="M898.2,109.5 V104 M895.5,106.4 L898.2,103.6 L900.9,106.4" fill="none" stroke="#fff" stroke-width="1.8"/>
<path d="M936.4,111.4 A5.3,5.3 0 1 1 940,111.4" fill="none" stroke="#333" stroke-width="2.3"/><path d="M934.8,101.2 Q938.2,100.2 941.6,101.2 L941.2,103 H935.2 Z" fill="#333"/><path d="M932.6,108.3 Q934.5,109 935.5,110.8" fill="none" stroke="#333" stroke-width="1"/>
<g fill="none" stroke="#333" stroke-width="1.5"><rect x="1015.45" y="99.55" width="8.4" height="5" rx="2.5" transform="rotate(45 1019.65 102.05)"/><rect x="1021.5" y="105.6" width="8.4" height="5" rx="2.5" transform="rotate(45 1025.7 108.1)"/></g>
</svg></body></html>
